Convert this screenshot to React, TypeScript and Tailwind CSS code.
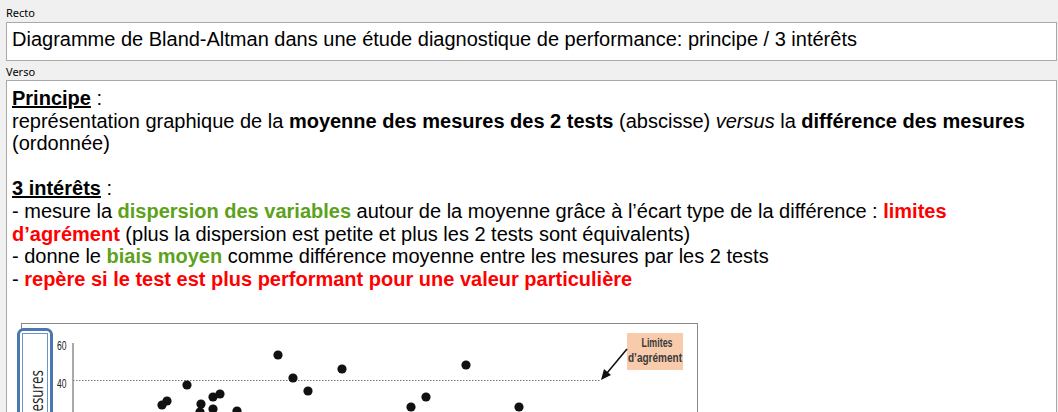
import React from 'react'

const DOTS: [number, number][] = [
  [264, 35], [328, 49], [279, 58], [294, 71], [173, 65], [452, 45],
  [412, 77], [397, 87], [505, 87], [153, 81], [148, 85], [187, 84],
  [199, 77], [206, 74], [199, 89], [223, 91], [186, 92],
]

function BlandAltmanChart() {
  return (
    <svg width="700" height="110" viewBox="0 0 700 110" className="block">
      {/* frame */}
      <rect x="7.5" y="3.5" width="676" height="120" fill="white" stroke="#8a8a8a" strokeWidth="1" />

      {/* y-axis title box */}
      <rect x="4.5" y="9.5" width="33" height="140" rx="5" fill="white" stroke="#4a78b4" strokeWidth="3" />
      <rect x="8.5" y="13.5" width="25" height="130" fill="white" stroke="#6b93c9" strokeWidth="1" />
      <text
        x="0"
        y="0"
        transform="translate(28.5 50) rotate(-90)"
        textAnchor="end"
        fontFamily="'Open Sans', sans-serif"
        fontSize="18"
        fill="#222"
        textLength="54"
        lengthAdjust="spacingAndGlyphs"
      >
        mesures
      </text>

      {/* ticks */}
      <text x="43" y="30" fontFamily="'Liberation Sans', sans-serif" fontSize="12" fill="#222" textLength="9.5" lengthAdjust="spacingAndGlyphs">60</text>
      <text x="43" y="68" fontFamily="'Liberation Sans', sans-serif" fontSize="12" fill="#222" textLength="9.5" lengthAdjust="spacingAndGlyphs">40</text>
      <line x1="59" y1="23" x2="59" y2="110" stroke="#555" strokeWidth="1" />

      {/* limit line */}
      <line x1="59" y1="60.5" x2="586" y2="60.5" stroke="#777" strokeWidth="1" strokeDasharray="1.5 1.5" />

      {DOTS.map(([cx, cy], i) => (
        <circle key={i} cx={cx} cy={cy} r="4.6" fill="#111" />
      ))}

      {/* annotation */}
      <rect x="613" y="13" width="56" height="37" fill="#f8cbad" />
      <text x="643" y="27" textAnchor="middle" fontFamily="'Liberation Sans', sans-serif" fontSize="13" fontWeight="bold" fill="#3a3a3a" textLength="31" lengthAdjust="spacingAndGlyphs">Limites</text>
      <text x="641" y="42" textAnchor="middle" fontFamily="'Liberation Sans', sans-serif" fontSize="13" fontWeight="bold" fill="#3a3a3a" textLength="54" lengthAdjust="spacingAndGlyphs">d’agrément</text>
      <line x1="613" y1="29" x2="593" y2="53" stroke="#111" strokeWidth="1.6" />
      <polygon points="587,60 590,49 597,55" fill="#111" />
    </svg>
  )
}

export default function App() {
  const green = 'font-bold text-[#5da11c]'
  const red = 'font-bold text-[#ff0000]'

  return (
    <div className="h-[412px] w-[1058px] overflow-hidden bg-[#f0f0f0] pl-[6px] pr-[1px] pt-[5px]">
      <div className="font-['Noto_Sans',sans-serif] text-[11px] leading-[16px] text-black">Recto</div>
      <div className="mt-[1px] h-[39px] border border-[#a9a9a9] bg-white px-[5px] pt-[5px] font-['Liberation_Sans',Arial,sans-serif] text-[20px] leading-[23px] text-black">
        Diagramme de Bland-Altman dans une étude diagnostique de performance: principe / 3 intérêts
      </div>

      <div className="mt-[3px] font-['Noto_Sans',sans-serif] text-[11px] leading-[16px] text-black">Verso</div>
      <div className="h-[360px] border border-[#a9a9a9] bg-white px-[5px] pt-[6px] font-['Liberation_Sans',Arial,sans-serif] text-[20px] leading-[22.6px] text-black">
        <div>
          <span className="font-bold underline">Principe</span> :
        </div>
        <div>
          représentation graphique de la <b>moyenne des mesures des 2 tests</b> (abscisse) <i>versus</i> la{' '}
          <b>différence des mesures</b>
          <br />
          (ordonnée)
        </div>
        <div>&nbsp;</div>
        <div>
          <span className="font-bold underline">3 intérêts</span> :
        </div>
        <div>
          - mesure la <span className={green}>dispersion des variables</span> autour de la moyenne grâce à l’écart type de la
          différence : <span className={red}>limites</span>
          <br />
          <span className={red}>d’agrément</span> (plus la dispersion est petite et plus les 2 tests sont équivalents)
        </div>
        <div>
          - donne le <span className={green}>biais moyen</span> comme différence moyenne entre les mesures par les 2 tests
        </div>
        <div>
          - <span className={red}>repère si le test est plus performant pour une valeur particulière</span>
        </div>
        <div>&nbsp;</div>
        <div className="ml-[2px] mt-[7px]">
          <BlandAltmanChart />
        </div>
      </div>
    </div>
  )
}
